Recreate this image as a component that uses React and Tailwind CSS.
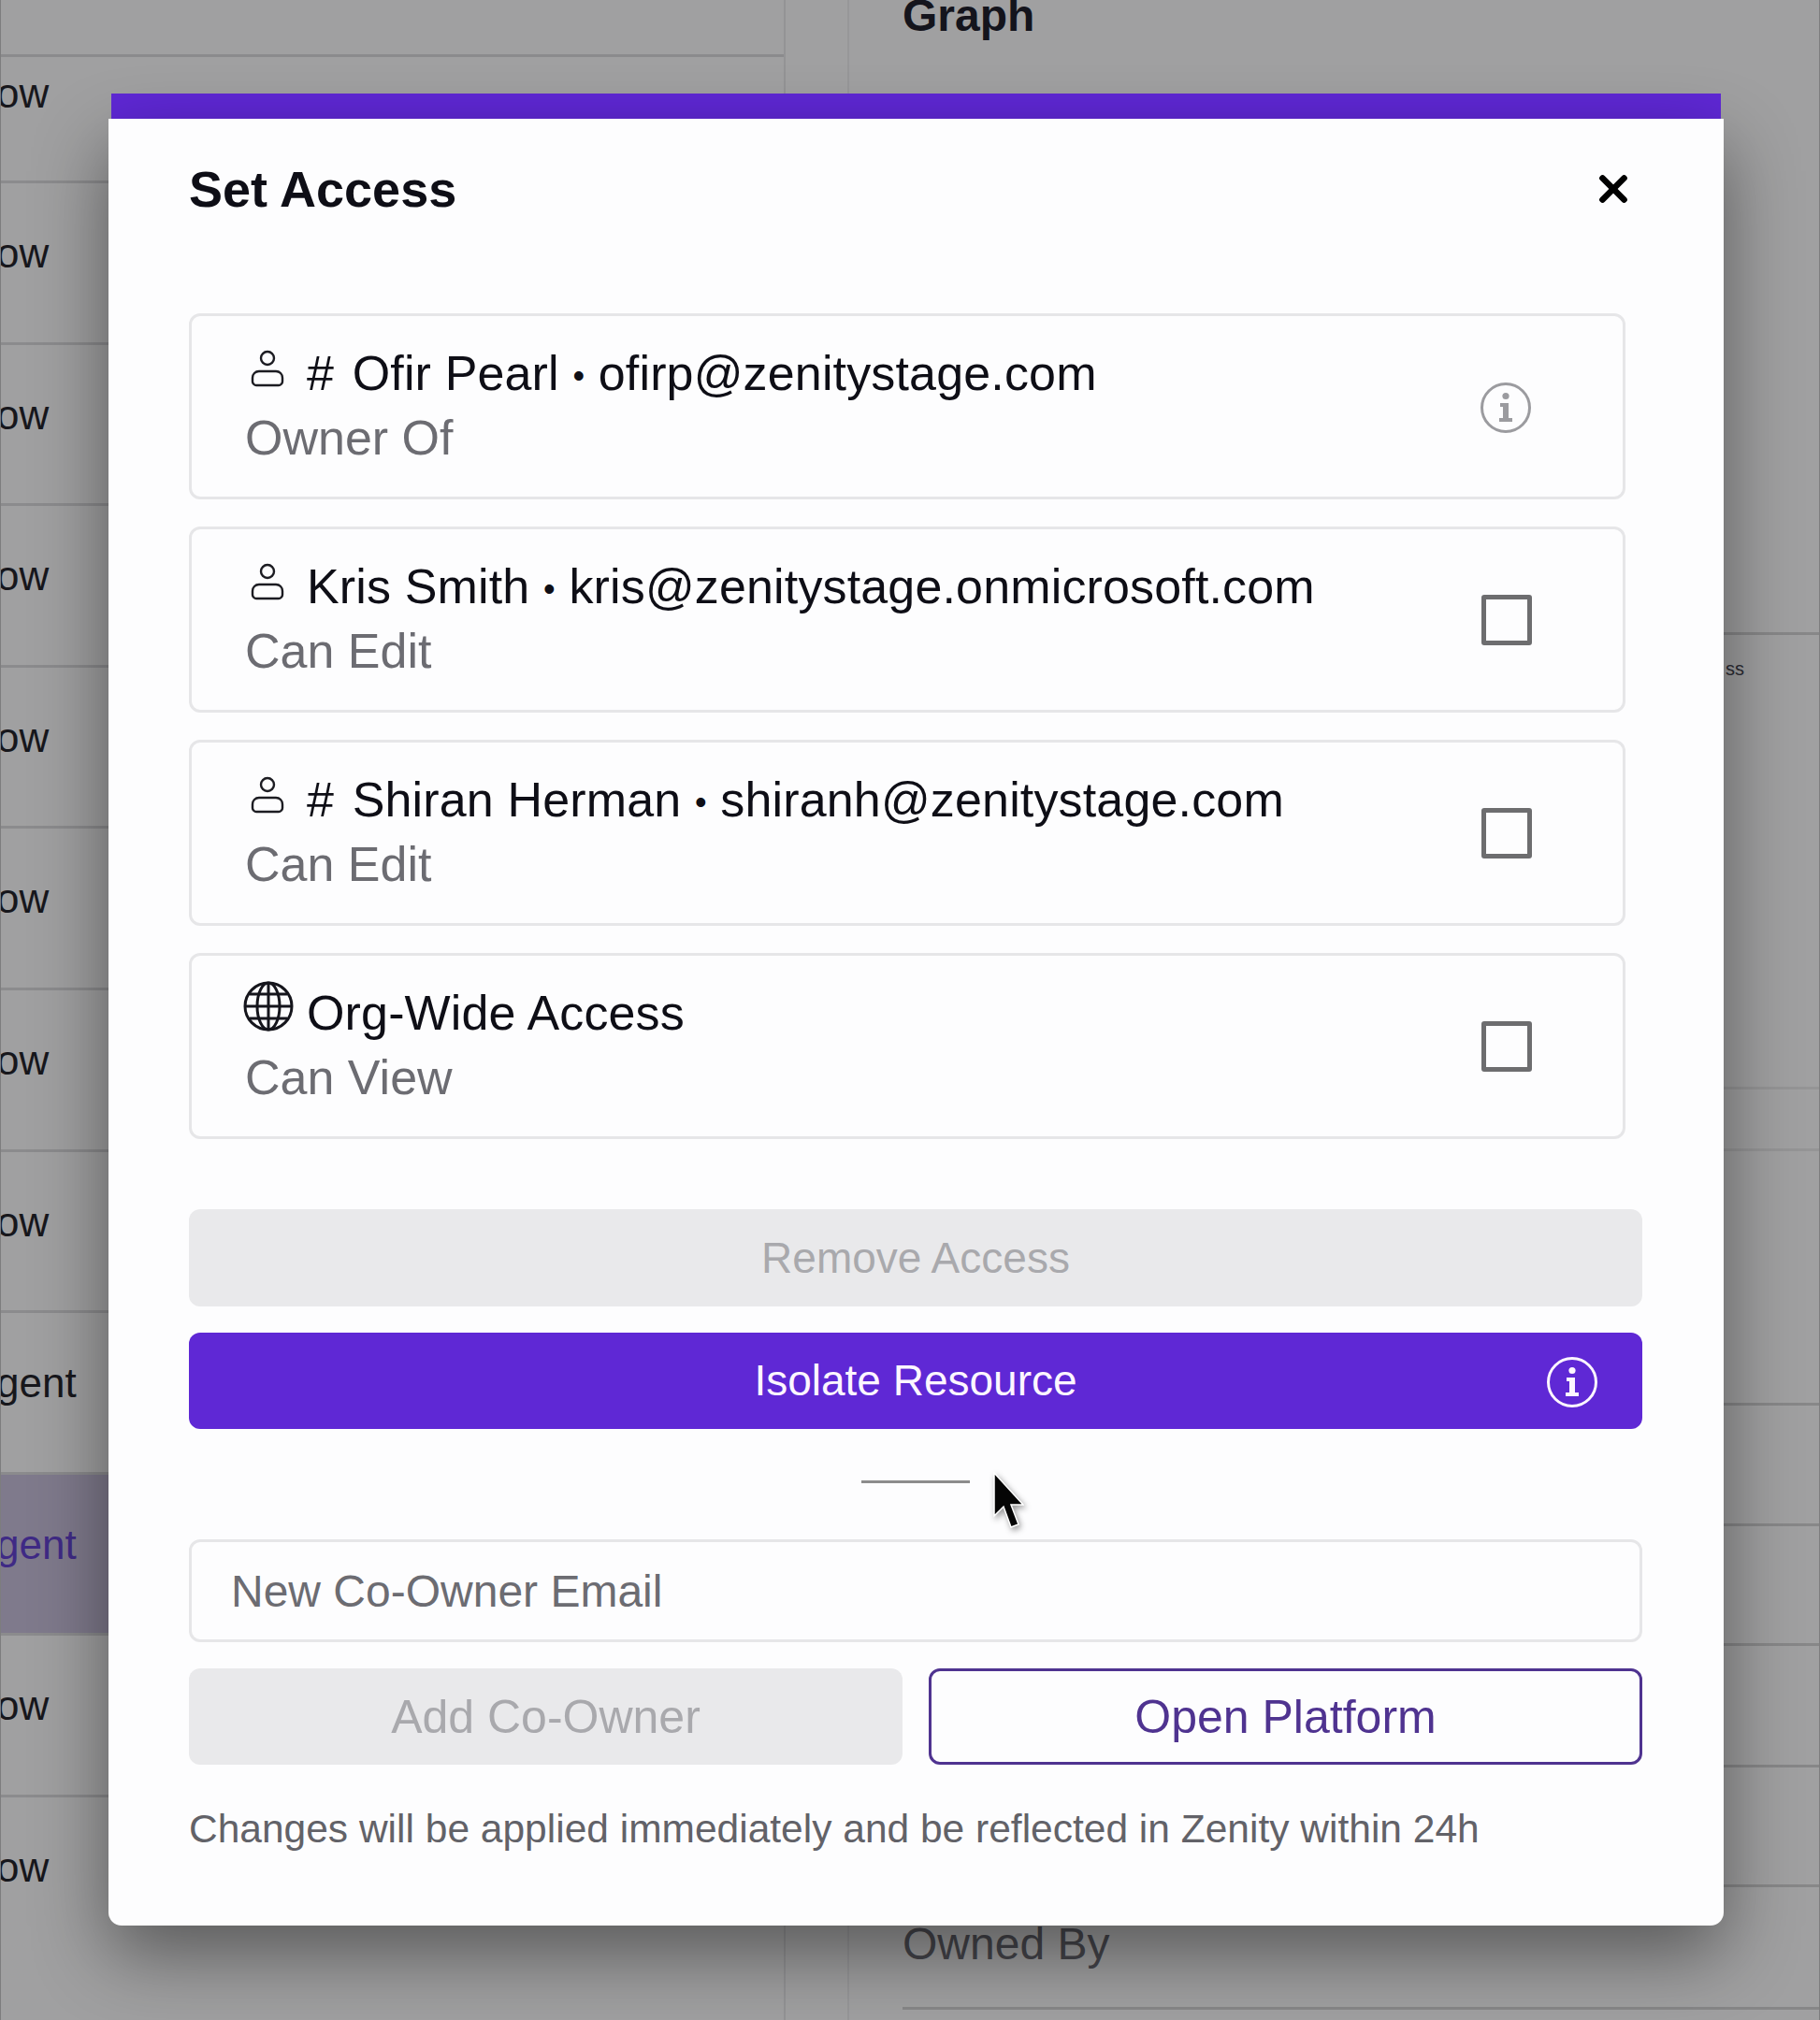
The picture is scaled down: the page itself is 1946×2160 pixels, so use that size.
import { X } from "lucide-react";

const sans = "font-['Liberation_Sans',Arial,sans-serif]";

const rows = ["ow", "ow", "ow", "ow", "ow", "ow", "ow", "ow", "gent", "gent", "ow", "ow"];

// rows of the panel on the right, most of them hidden behind the dialog
const graphRows = [
  { h: "h-[486px]", text: "ss" },
  { h: "h-[66px]", faint: true },
  { h: "h-[272px]", faint: true },
  { h: "h-[129px]" },
  { h: "h-[128px]" },
  { h: "h-[130px]" },
  { h: "h-[128px]" },
  { h: "h-[131px]", label: "Owned By" },
  { h: "h-[14px]" },
];

const people = [
  { icon: "user", tag: "#", name: "Ofir Pearl", email: "ofirp@zenitystage.com", role: "Owner Of", locked: true },
  { icon: "user", name: "Kris Smith", email: "kris@zenitystage.onmicrosoft.com", role: "Can Edit" },
  { icon: "user", tag: "#", name: "Shiran Herman", email: "shiranh@zenitystage.com", role: "Can Edit" },
  { icon: "globe", name: "Org-Wide Access", role: "Can View" },
];

function UserIcon() {
  return (
    <svg viewBox="0 0 36 40" className="w-[36px] h-[40px] ml-[6px] mr-[24px] mt-[-10px] shrink-0" fill="none" stroke="#1c1c22" strokeWidth="2.4">
      <circle cx="18" cy="9" r="7" />
      <path d="M9 23h18c4 0 7 3 7 7v4c0 2-2 4-4 4H6c-2 0-4-2-4-4v-4c0-4 3-7 7-7z" />
    </svg>
  );
}

function GlobeIcon() {
  return (
    <svg viewBox="0 0 54 54" className="w-[54px] h-[54px] ml-[-2px] mr-[14px] mt-[-14px] shrink-0" fill="none" stroke="#15151c" strokeWidth="3">
      <circle cx="27" cy="27" r="25" />
      <ellipse cx="27" cy="27" rx="12" ry="25" />
      <path d="M27 2v50M2 27h50M7 14h40M7 40h40" />
    </svg>
  );
}

function InfoIcon({ className }) {
  return (
    <svg viewBox="0 0 56 56" className={className} fill="none">
      <circle cx="28" cy="28" r="25.5" stroke="currentColor" strokeWidth="3" />
      <circle cx="28" cy="15.5" r="3.6" fill="currentColor" />
      <path d="M22 23h9v16h4v4H21v-4h4V27h-3z" fill="currentColor" />
    </svg>
  );
}

function AccessCard({ person }) {
  return (
    <div className="h-[199px] border-[3px] border-[#e6e6e8] rounded-[12px] pl-[57px] pr-[97px] flex items-center justify-between">
      <div>
        <div className="flex items-center h-[62px] mt-[-2px] text-[52px] leading-none tracking-[0.15px] text-[#0e0e16]">
          {person.icon === "user" ? <UserIcon /> : <GlobeIcon />}
          <span>
            {person.tag ? <span className="mr-[5px]">{person.tag} </span> : null}
            {person.name}
            {person.email ? (
              <>
                {" "}
                <span className="text-[36px] align-[3px]">•</span> {person.email}
              </>
            ) : null}
          </span>
        </div>
        <div className="mt-[7px] text-[52px] leading-[62px] text-[#6c6c72]">{person.role}</div>
      </div>
      {person.locked ? (
        <InfoIcon className="w-[56px] h-[56px] mt-[2px] text-[#9b9b9f]" />
      ) : (
        <div className="w-[54px] h-[54px] border-[5px] border-[#6d6d6f] rounded-[3px]" />
      )}
    </div>
  );
}

export default function App() {
  return (
    <div className={`relative w-[1946px] h-[2160px] overflow-hidden bg-[#a0a0a1] border-x border-[#7d7d7e] ${sans}`}>
      {/* page behind the dialog */}
      <div className="flex h-full">
        <div className="w-[839px] shrink-0 pt-[58px] border-r-[2px] border-[#939395]">
          {rows.map((label, i) => (
            <div
              key={i}
              className={`flex border-t-[3px] border-[#8b8b8d] text-[44px] leading-[56px] ${
                i === 0 ? "h-[135px] pt-[11px]" : "h-[172.6px] pt-[47px]"
              } ${i === 9 ? "bg-[#7f7a8c] text-[#3f2a85]" : "text-[#17171c]"}`}
            >
              <span className="ml-[-5px] whitespace-nowrap">{label}</span>
            </div>
          ))}
        </div>
        <div className="w-[68px] shrink-0 border-r-[2px] border-[#979799]" />
        <div className="flex-1 pl-[57px]">
          <div className="h-[683px] mt-[-7px] text-[48px] leading-none font-bold text-[#14141c]">Graph</div>
          {graphRows.map((row, i) => (
            <div
              key={i}
              className={`${row.h} border-t-[3px] ${row.faint ? "border-[#959596]" : "border-[#878788]"}`}
            >
              {row.text ? (
                <div className="mt-[24px] pr-[80px] text-right text-[20px] leading-[24px] text-[#2c2c34]">{row.text}</div>
              ) : null}
              {row.label ? <div className="mt-[33px] text-[48px] leading-[56px] text-[#46464c]">{row.label}</div> : null}
            </div>
          ))}
        </div>
      </div>

      {/* dialog */}
      <div className="absolute left-[115px] top-[100px] w-[1727px] flex flex-col">
        <div className="h-[27px] ml-[3px] mr-[3px] bg-[#5f28d5]" />
        <div className="h-[1932px] bg-[#fdfdfe] rounded-b-[14px] pl-[86px] pr-[87px] shadow-[0_30px_80px_rgba(0,0,0,0.45)]">
          <div className="flex items-center justify-between pr-[18px] h-[150px]">
            <h2 className="text-[54px] font-bold text-[#0e0e16]">Set Access</h2>
            <X className="w-[46px] h-[46px] text-black mr-[-10px]" strokeWidth={3.5} />
          </div>
          <div className="mt-[58px] mr-[18px] flex flex-col gap-[29px]">
            {people.map((person) => (
              <AccessCard key={person.name} person={person} />
            ))}
          </div>
          <button className="mt-[75px] w-full h-[104px] rounded-[12px] bg-[#e9e9eb] text-[46px] text-[#a9a9ad]">
            Remove Access
          </button>
          <button className="relative mt-[28px] w-full h-[103px] rounded-[12px] bg-[#5f28d5] text-[46px] text-[#fdf6ff] flex items-center justify-center">
            Isolate Resource
            <InfoIcon className="absolute right-[47px] top-[25px] w-[56px] h-[56px]" />
          </button>
          <div className="relative mt-[55px] mx-auto w-[116px] h-[3px] bg-[#8c8c8c]">
            {/* mouse pointer from the recording */}
            <svg
              viewBox="0 0 34 62"
              className="absolute left-[140px] top-[-9px] w-[34px] h-[62px] drop-shadow-[2px_3px_3px_rgba(0,0,0,0.4)]"
            >
              <path d="M2 1v46l10-10 8 22 8-3-8-21h13z" fill="#050505" stroke="#fff" strokeWidth="1.5" />
            </svg>
          </div>
          <input
            readOnly
            placeholder="New Co-Owner Email"
            className="mt-[60px] block w-full h-[110px] border-[3px] border-[#e6e6e8] rounded-[12px] px-[42px] text-[48px] placeholder:text-[#6c6c72] outline-none bg-transparent"
          />
          <div className="mt-[28px] grid grid-cols-2 gap-[28px]">
            <button className="h-[103px] rounded-[12px] bg-[#e9e9eb] text-[50px] text-[#a9a9ad] pt-[2px]">Add Co-Owner</button>
            <button className="h-[103px] rounded-[12px] border-[3px] border-[#4f3390] text-[50px] text-[#4f3390] pt-[2px]">
              Open Platform
            </button>
          </div>
          <p className="mt-[48px] text-[42.5px] leading-none text-[#626268]">
            Changes will be applied immediately and be reflected in Zenity within 24h
          </p>
        </div>
      </div>
    </div>
  );
}
